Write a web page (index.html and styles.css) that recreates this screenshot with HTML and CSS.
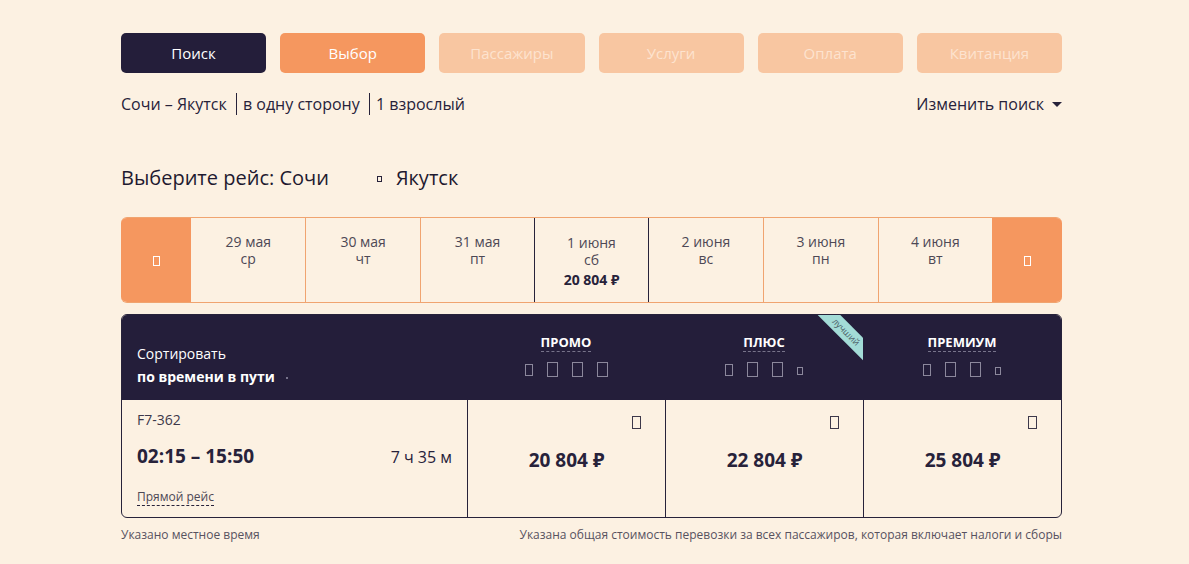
FILE: index.html
```html
<!DOCTYPE html>
<html lang="ru">
<head>
    <meta charset="UTF-8">
    <meta name="viewport" content="width=device-width, initial-scale=1.0">
    <title>Выбор рейса</title>
    <link rel="stylesheet" href="styles.css">
</head>
<body>
<div class="container">
    <!-- шаги бронирования -->
    <div class="steps">
        <div class="step step-done">Поиск</div>
        <div class="step step-active">Выбор</div>
        <div class="step">Пассажиры</div>
        <div class="step">Услуги</div>
        <div class="step">Оплата</div>
        <div class="step">Квитанция</div>
    </div>

    <div class="summary">
        <div class="summary-info">
            <span>Сочи – Якутск</span>
            <span class="sep">в одну сторону</span>
            <span class="sep">1 взрослый</span>
        </div>
        <div class="change">Изменить поиск <span class="caret"></span></div>
    </div>

    <h1 class="title">Выберите рейс: Сочи<span class="tofu tofu-title"></span>Якутск</h1>

    <!-- календарь -->
    <div class="dates">
        <div class="arrow arrow-left"><span class="tofu tofu-arrow"></span></div>
        <div class="date"><div>29 мая</div><div>ср</div></div>
        <div class="date"><div>30 мая</div><div>чт</div></div>
        <div class="date"><div>31 мая</div><div>пт</div></div>
        <div class="date date-selected"><div>1 июня</div><div>сб</div><div class="date-price">20 804 ₽</div></div>
        <div class="date"><div>2 июня</div><div>вс</div></div>
        <div class="date"><div>3 июня</div><div>пн</div></div>
        <div class="date"><div>4 июня</div><div>вт</div></div>
        <div class="arrow arrow-right"><span class="tofu tofu-arrow"></span></div>
    </div>

    <!-- тарифы -->
    <div class="fares">
        <div class="head head-sort">
            <div>Сортировать</div>
            <div class="sort-value">по времени в пути <span class="dot"></span></div>
        </div>
        <div class="head">
            <div class="fare-name">ПРОМО</div>
            <div class="fare-icons">
                <span class="tofu ic-s"></span><span class="tofu ic"></span><span class="tofu ic"></span><span class="tofu ic"></span>
            </div>
        </div>
        <div class="head">
            <div class="fare-name">ПЛЮС</div>
            <div class="fare-icons">
                <span class="tofu ic-s"></span><span class="tofu ic"></span><span class="tofu ic"></span><span class="tofu ic-xs"></span>
            </div>
            <div class="ribbon"><span>лучший</span></div>
        </div>
        <div class="head">
            <div class="fare-name">ПРЕМИУМ</div>
            <div class="fare-icons">
                <span class="tofu ic-s"></span><span class="tofu ic"></span><span class="tofu ic"></span><span class="tofu ic-xs"></span>
            </div>
        </div>

        <div class="flight">
            <div class="flight-num">F7-362</div>
            <div class="flight-time">
                <span class="time">02:15 – 15:50</span>
                <span class="duration">7 ч 35 м</span>
            </div>
            <div class="flight-type"><span>Прямой рейс</span></div>
        </div>
        <div class="price"><span class="tofu tofu-price"></span>20 804 ₽</div>
        <div class="price"><span class="tofu tofu-price"></span>22 804 ₽</div>
        <div class="price"><span class="tofu tofu-price"></span>25 804 ₽</div>
    </div>

    <div class="notes">
        <span>Указано местное время</span>
        <span>Указана общая стоимость перевозки за всех пассажиров, которая включает налоги и сборы</span>
    </div>
</div>
</body>
</html>
```

FILE: styles.css
```css
/* общие стили */
body {
    font-family: 'Open Sans', 'Noto Sans', sans-serif;
    margin: 0;
    padding: 0;
    background: #fcf1e2;
    color: #27223a;
}

.container {
    width: 941px;
    margin-left: 121px;
    padding-top: 33px;
}

/* шаги */
.steps {
    display: grid;
    grid-template-columns: repeat(6, 1fr);
    gap: 14px;
}

.step {
    height: 40px;
    line-height: 40px;
    border-radius: 5px;
    text-align: center;
    font-size: 15px;
    background: #f8c6a1;
    color: #fde3cf;
}

.step-done {
    background: #241e3a;
    color: #fff;
    font-weight: 500;
}

.step-active {
    background: #f5975f;
    color: #fff;
    font-weight: 500;
}

/* строка поиска */
.summary {
    display: flex;
    justify-content: space-between;
    align-items: center;
    margin-top: 21px;
    font-size: 16px;
    line-height: 21px;
    color: #27223a;
}

.summary-info .sep {
    border-left: 1px solid #27223a;
    padding-left: 6px;
    margin-left: 5px;
}

.change {
    display: flex;
    align-items: center;
}

.caret {
    display: inline-block;
    margin-left: 8px;
    border-left: 5px solid transparent;
    border-right: 5px solid transparent;
    border-top: 5px solid #27223a;
}

.title {
    margin: 48px 0 0;
    font-size: 20px;
    line-height: 30px;
    font-weight: 500;
    color: #1f1a30;
}

/* квадраты вместо иконок */
.tofu {
    display: inline-block;
    box-sizing: border-box;
    border: 1px solid #27223a;
}

.tofu-title {
    width: 5px;
    height: 6px;
    margin: 0 14px 0 48px;
    vertical-align: 3px;
}

/* календарь */
.dates {
    display: grid;
    grid-template-columns: 70px repeat(7, 1fr) 70px;
    height: 86px;
    margin-top: 24px;
    border-radius: 6px;
    overflow: hidden;
    border-top: 1px solid #f0a470;
    border-bottom: 1px solid #f0a470;
    box-sizing: border-box;
}

.arrow {
    background: #f5975f;
    display: flex;
    align-items: center;
    justify-content: center;
}

.tofu-arrow {
    width: 7px;
    height: 10px;
    border-color: #fff;
    margin-top: 2px;
}

.date {
    border-left: 1px solid #f0a470;
    padding-top: 15px;
    text-align: center;
    font-size: 14px;
    line-height: 17px;
    color: #4d4855;
}

.date:nth-child(2) {
    border-left: none;
}

.date-selected {
    border: 1px solid #27223a;
    margin-top: -1px;
    margin-bottom: -1px;
    padding-top: 16px;
}

.date-selected + .date {
    border-left: none;
}

.date-price {
    margin-top: 3px;
    font-size: 14px;
    font-weight: 700;
    color: #27223a;
}

/* тарифы */
.fares {
    display: grid;
    grid-template-columns: 345px repeat(3, 1fr);
    margin-top: 11px;
    border: 1px solid #27223a;
    border-radius: 6px;
    overflow: hidden;
}

.head {
    position: relative;
    background: #241e3a;
    height: 85px;
    color: #fff;
    text-align: center;
    padding-top: 15px;
    box-sizing: border-box;
}

.head-sort {
    display: flex;
    flex-direction: column;
    justify-content: flex-end;
    text-align: left;
    padding: 0 0 13px 15px;
    font-size: 14px;
    line-height: 20px;
    gap: 3px;
}

.sort-value {
    font-weight: 700;
}

.dot {
    display: inline-block;
    width: 2px;
    height: 2px;
    margin-left: 8px;
    background: #77738a;
    vertical-align: middle;
}

.fare-name {
    display: inline-block;
    font-size: 13px;
    font-weight: 700;
    line-height: 17px;
    border-bottom: 1px dashed #77738a;
}

.fare-icons {
    display: flex;
    justify-content: center;
    align-items: center;
    gap: 14px;
    height: 15px;
    margin-top: 10px;
}

.fare-icons .tofu {
    border-color: #8c889c;
}

.ic {
    width: 11px;
    height: 15px;
}

.ic-s {
    width: 8px;
    height: 12px;
}

.ic-xs {
    width: 6px;
    height: 8px;
    margin-top: 2px;
}

.ribbon {
    position: absolute;
    top: 0;
    right: 0;
    width: 46px;
    height: 46px;
    overflow: hidden;
}

.ribbon span {
    position: absolute;
    left: -6px;
    top: 9px;
    width: 70px;
    height: 16px;
    line-height: 16px;
    background: #a3dcd7;
    color: #4b5e66;
    font-size: 9px;
    text-align: center;
    transform: rotate(45deg);
}

.flight {
    padding: 11px 15px 12px 15px;
    color: #27223a;
}

.flight-num {
    font-size: 14px;
    line-height: 18px;
    color: #3d384a;
}

.flight-time {
    display: flex;
    justify-content: space-between;
    align-items: baseline;
    margin-top: 15px;
    line-height: 24px;
}

.time {
    font-size: 19px;
    font-weight: 700;
}

.duration {
    font-size: 16px;
}

.flight-type {
    margin-top: 20px;
    font-size: 12px;
    line-height: 16px;
    color: #4d4855;
}

.flight-type span {
    border-bottom: 1px dashed #27223a;
}

.price {
    position: relative;
    border-left: 1px solid #27223a;
    display: flex;
    align-items: center;
    justify-content: center;
    padding-top: 3px;
    font-size: 19px;
    font-weight: 700;
    color: #27223a;
}

.tofu-price {
    position: absolute;
    top: 16px;
    right: 24px;
    width: 9px;
    height: 13px;
    border-color: #3d384a;
}

.notes {
    display: flex;
    justify-content: space-between;
    margin-top: 9px;
    font-size: 12px;
    line-height: 16px;
    color: #57525f;
}
```
